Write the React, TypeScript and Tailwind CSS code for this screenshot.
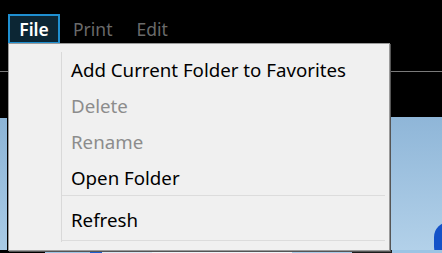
const items = [
  { label: 'Add Current Folder to Favorites', disabled: false },
  { label: 'Delete', disabled: true },
  { label: 'Rename', disabled: true },
  { label: 'Open Folder', disabled: false },
]

export default function App() {
  return (
    <div
      className="relative w-[442px] h-[253px] overflow-hidden bg-black"
      style={{ fontFamily: '"Noto Sans", "Open Sans", sans-serif' }}
    >
      {/* Desktop behind the menu */}
      <div className="absolute left-0 top-[71px] w-[442px] h-px bg-[#7a7a7a]" />
      <div className="absolute left-0 top-[118px] w-[7px] h-[135px] bg-gradient-to-b from-[#8cb4d6] to-[#a9cbe6]" />
      <div className="absolute right-0 top-[117px] w-[52px] h-[140px] bg-gradient-to-b from-[#8fb6d8] to-[#b4d2ea]" />
      <div className="absolute left-[434px] top-[222px] w-[30px] h-[40px] rounded-full bg-[#1452c8]" />
      <div className="absolute left-0 top-[250px] w-[442px] h-[3px] flex">
        <div className="w-[45px] bg-black" />
        <div className="w-[45px] bg-[#9cc4e4]" />
        <div className="w-[12px] bg-[#1d5fd0]" />
        <div className="w-[50px] bg-[#d8e6f2]" />
        <div className="w-[140px] bg-[#eef3f8]" />
        <div className="w-[60px] bg-[#a8cbe8]" />
        <div className="w-[40px] bg-[#1c1c1c]" />
        <div className="flex-1 bg-[#9cc4e4]" />
      </div>

      {/* Menu bar */}
      <div className="relative flex items-center h-[30px] mt-[14px] ml-[8px] text-[17.5px]">
        <div className="h-[30px] w-[52px] flex items-center justify-center border-2 border-[#1f8fd0] bg-[#0c2634] text-white font-semibold">
          File
        </div>
        <div className="ml-[13px] text-[#6a6a6a]">Print</div>
        <div className="ml-[24px] text-[#6a6a6a]">Edit</div>
      </div>

      {/* Dropdown */}
      <div className="absolute left-[8px] top-[43px] w-[382px] h-[208px] bg-[#f0f0f0] border border-[#9a9a9a] shadow-[1px_1px_0_#555]">
        <div className="absolute left-[52px] top-[8px] w-px h-[190px] bg-[#d9d9d9]" />
        <div className="pt-[8px] pl-[53px] pr-[4px] text-[18.7px] text-black">
          {items.map((it) => (
            <div
              key={it.label}
              className={`h-[36px] flex items-center pl-[9px] ${it.disabled ? 'text-[#8c8c8c]' : 'text-black'}`}
            >
              {it.label}
            </div>
          ))}
          <div className="h-px bg-[#dcdcdc] mt-[-1px] mb-[6px]" />
          <div className="h-[36px] flex items-center pl-[9px]">Refresh</div>
          <div className="h-px bg-[#dcdcdc] mt-[2px]" />
        </div>
      </div>
    </div>
  )
}
